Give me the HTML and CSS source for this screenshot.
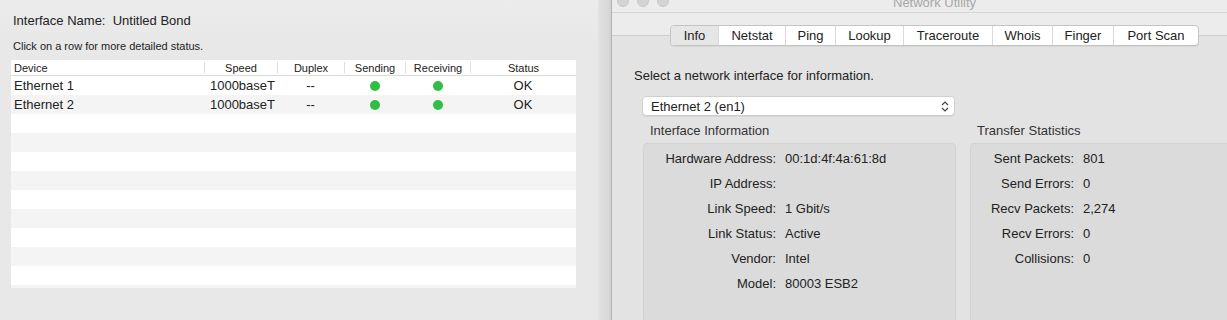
FILE: index.html
```html
<!DOCTYPE html>
<html lang="en">
<head>
  <meta charset="UTF-8" />
  <title>Network Utility</title>
  <link rel="stylesheet" href="styles.css">
</head>
<body>
  <!-- Bond sheet (left) -->
  <div class="bond-panel">
    <div class="bond-title">Interface Name:&nbsp;&nbsp;Untitled Bond</div>
    <div class="bond-hint">Click on a row for more detailed status.</div>

    <div class="device-table">
      <div class="row head">
        <div class="c-device">Device</div>
        <div class="c-speed sep">Speed</div>
        <div class="c-duplex sep">Duplex</div>
        <div class="c-send sep">Sending</div>
        <div class="c-recv sep">Receiving</div>
        <div class="c-status sep">Status</div>
      </div>
      <div class="row">
        <div class="c-device">Ethernet 1</div>
        <div class="c-speed right">1000baseT</div>
        <div class="c-duplex">--</div>
        <div class="c-send"><span class="dot"></span></div>
        <div class="c-recv"><span class="dot"></span></div>
        <div class="c-status">OK</div>
      </div>
      <div class="row">
        <div class="c-device">Ethernet 2</div>
        <div class="c-speed right">1000baseT</div>
        <div class="c-duplex">--</div>
        <div class="c-send"><span class="dot"></span></div>
        <div class="c-recv"><span class="dot"></span></div>
        <div class="c-status">OK</div>
      </div>
      <div class="row"></div>
      <div class="row"></div>
      <div class="row"></div>
      <div class="row"></div>
      <div class="row"></div>
      <div class="row"></div>
      <div class="row"></div>
      <div class="row"></div>
      <div class="row"></div>
      <div class="row"></div>
    </div>
  </div>

  <div class="window-shadow"></div>

  <!-- Network Utility window -->
  <div class="window">
    <div class="titlebar">
      <span class="light"></span>
      <span class="light"></span>
      <span class="light"></span>
      <span class="win-title">Network Utility</span>
    </div>
    <div class="toolbar"></div>

    <div class="tab-box">
      <div class="tabs">
        <div class="tab active">Info</div>
        <div class="tab">Netstat</div>
        <div class="tab">Ping</div>
        <div class="tab">Lookup</div>
        <div class="tab">Traceroute</div>
        <div class="tab">Whois</div>
        <div class="tab">Finger</div>
        <div class="tab">Port Scan</div>
      </div>

      <div class="select-label">Select a network interface for information.</div>

      <div class="popup">
        <span>Ethernet 2 (en1)</span>
        <svg width="8" height="11" viewBox="0 0 8 11">
          <path d="M1 4 L4 1 L7 4 M1 7 L4 10 L7 7" fill="none" stroke="#444" stroke-width="1.2"/>
        </svg>
      </div>

      <div class="groups">
        <div class="group info-group">
          <div class="group-label">Interface Information</div>
          <div class="group-box">
            <div class="kv"><span class="k">Hardware Address:</span><span>00:1d:4f:4a:61:8d</span></div>
            <div class="kv"><span class="k">IP Address:</span><span></span></div>
            <div class="kv"><span class="k">Link Speed:</span><span>1 Gbit/s</span></div>
            <div class="kv"><span class="k">Link Status:</span><span>Active</span></div>
            <div class="kv"><span class="k">Vendor:</span><span>Intel</span></div>
            <div class="kv"><span class="k">Model:</span><span>80003 ESB2</span></div>
          </div>
        </div>
        <div class="group stats-group">
          <div class="group-label">Transfer Statistics</div>
          <div class="group-box">
            <div class="kv"><span class="k">Sent Packets:</span><span>801</span></div>
            <div class="kv"><span class="k">Send Errors:</span><span>0</span></div>
            <div class="kv"><span class="k">Recv Packets:</span><span>2,274</span></div>
            <div class="kv"><span class="k">Recv Errors:</span><span>0</span></div>
            <div class="kv"><span class="k">Collisions:</span><span>0</span></div>
          </div>
        </div>
      </div>
    </div>
  </div>
</body>
</html>
```

FILE: styles.css
```css
* {
  box-sizing: border-box;
  margin: 0;
  padding: 0;
}

body {
  width: 1227px;
  height: 320px;
  overflow: hidden;
  display: flex;
  font-family: "Liberation Sans", Arial, sans-serif;
  font-size: 13px;
  color: #222;
  background: #e8e8e8;
}

/* Left: bond sheet */
.bond-panel {
  width: 598px;
  flex: none;
  padding: 13px 0 0 11px;
  background: linear-gradient(#ececec 0, #e8e8e8 40px);
}

.bond-title {
  padding-left: 2px;
  line-height: 16px;
}

.bond-hint {
  font-size: 11px;
  padding-left: 2px;
  margin-top: 10px;
  line-height: 14px;
}

.device-table {
  margin-top: 7px;
  width: 565px;
  height: 228px;
  overflow: hidden;
}

.row {
  display: flex;
  height: 19px;
  align-items: center;
  background: #fff;
}

.row:nth-child(odd) {
  background: #f4f4f4;
}

.row.head {
  height: 16px;
  background: #fff;
  font-size: 11px;
  border-bottom: 1px solid #dcdcdc;
}

.row > div {
  height: 100%;
  display: flex;
  align-items: center;
  justify-content: center;
}

.row.head > div.sep {
  border-left: 1px solid #dedede;
  height: 11px;
}

.c-device { width: 193px; padding-left: 3px; justify-content: flex-start !important; }
.c-speed { width: 73px; }
.c-speed.right { justify-content: flex-end !important; padding-right: 2px; }
.c-duplex { width: 67px; }
.c-send { width: 61px; }
.c-recv { width: 65px; }
.c-status { width: 106px; }

.dot {
  width: 10px;
  height: 10px;
  border-radius: 50%;
  background: #2fbf44;
}

/* shadow between windows */
.window-shadow {
  width: 13px;
  flex: none;
  background: linear-gradient(to right, #e2e2e2, #d8d8d8 80%, #cfcfcf);
}

/* Right: Network Utility */
.window {
  flex: 1;
  min-width: 0;
  height: 320px;
  overflow: hidden;
  border-left: 1px solid #b4b4b4;
  background: #e3e3e3;
}

.titlebar {
  height: 12px;
  display: flex;
  align-items: flex-start;
  padding-left: 5px;
  background: #ececec;
  overflow: hidden;
}

.light {
  width: 12px;
  height: 12px;
  margin: -5px 8px 0 0;
  border-radius: 50%;
  background: #d4d4d4;
  border: 1px solid #c8c8c8;
}

.win-title {
  margin: -5px 0 0 216px;
  color: #a8a8a8;
  line-height: 16px;
}

.toolbar {
  height: 23px;
  background: #ececec;
  border-top: 1px solid #d6d6d6;
}

.tab-box {
  border-top: 1px solid #cdcdcd;
}

.tabs {
  display: flex;
  width: 529px;
  height: 21px;
  margin: -11px 0 0 58px;
  background: #fff;
  border: 1px solid #c4c4c4;
  border-radius: 4px;
  overflow: hidden;
  box-shadow: 0 1px 0 rgba(0, 0, 0, 0.05);
}

.tab {
  display: flex;
  align-items: center;
  justify-content: center;
  border-left: 1px solid #dadada;
  line-height: 19px;
}

.tab:first-child { border-left: none; }
.tab.active { background: #e6e6e6; }

.tab:nth-child(1) { width: 47px; }
.tab:nth-child(2) { width: 67px; }
.tab:nth-child(3) { width: 50px; }
.tab:nth-child(4) { width: 68px; }
.tab:nth-child(5) { width: 89px; }
.tab:nth-child(6) { width: 60px; }
.tab:nth-child(7) { width: 61px; }
.tab:nth-child(8) { flex: 1; }

.select-label {
  margin: 22px 0 0 22px;
  line-height: 16px;
}

.popup {
  display: flex;
  align-items: center;
  justify-content: space-between;
  width: 313px;
  height: 20px;
  margin: 12px 0 0 30px;
  padding: 0 5px 0 8px;
  background: #fff;
  border: 1px solid #cfcfcf;
  border-radius: 4px;
  box-shadow: 0 1px 0 rgba(0, 0, 0, 0.06);
}

.groups {
  display: flex;
  gap: 14px;
  margin: 7px 0 0 31px;
}

.group {
  flex: none;
}

.group-label {
  padding-left: 7px;
  color: #333;
  line-height: 16px;
  margin-bottom: 4px;
}

.group-box {
  height: 180px;
  padding-top: 2px;
  background: #dbdbdb;
  border: 1px solid #d2d2d2;
  border-radius: 4px;
}

.info-group { width: 313px; }
.stats-group { width: 270px; }

.kv {
  display: flex;
  height: 25px;
  align-items: center;
  gap: 9px;
}

.k {
  text-align: right;
  flex: none;
}

.info-group .k { width: 132px; }
.stats-group .k { width: 103px; }
```
